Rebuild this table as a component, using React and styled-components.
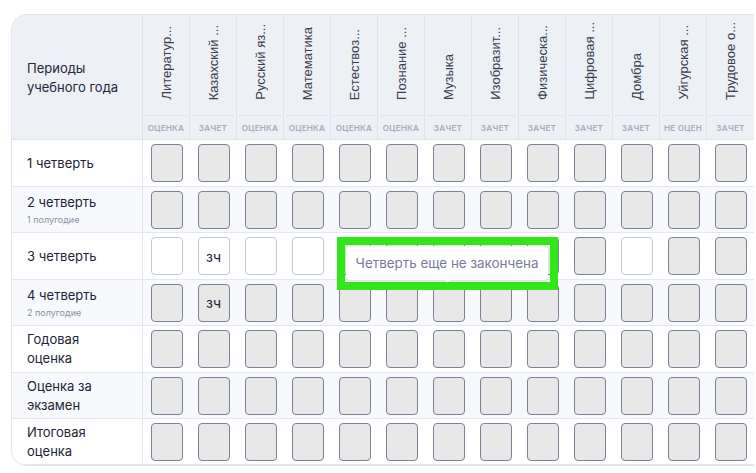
import React from "react";
import styled, { createGlobalStyle } from "styled-components";

const Global = createGlobalStyle`
  html, body { margin: 0; padding: 0; background: #ffffff; overflow: hidden; }
  * { box-sizing: border-box; }
`;

const COLS = "131px repeat(13, 47px)";

const Page = styled.div`
  padding: 14px 0 0 11px;
  width: 756px;
  height: 473px;
  overflow: hidden;
`;

const Card = styled.div`
  position: relative;
  width: max-content;
  border: 1px solid #e1e5ec;
  border-right: none;
  border-radius: 16px 0 0 16px;
  overflow: hidden;
  background: #ffffff;
  font-family: Inter, "Noto Sans", sans-serif;
`;

const HeaderRow = styled.div`
  display: grid;
  grid-template-columns: ${COLS};
  background: #edf0f5;
  border-bottom: 1px solid #dfe3ea;
`;

const CornerCell = styled.div`
  display: flex;
  align-items: center;
  padding: 2px 0 0 15px;
  border-right: 1px solid #dfe3ea;
  font-size: 13px;
  line-height: 19px;
  color: #23273a;
`;

const SubjectHead = styled.div`
  display: flex;
  flex-direction: column;
  border-right: 1px solid #dfe3ea;
  &:last-child { border-right: none; }
`;

const NameArea = styled.div`
  height: 100px;
  display: flex;
  align-items: flex-end;
  justify-content: center;
  padding-bottom: 15px;
`;

const NameText = styled.span`
  writing-mode: vertical-rl;
  transform: rotate(180deg);
  white-space: nowrap;
  font-family: "Liberation Sans", Arial, sans-serif;
  font-size: 13px;
  color: #3a3e50;
`;

const TypeLabel = styled.div`
  height: 24px;
  margin: 0 2px;
  border-top: 1px solid #dfe3ea;
  display: flex;
  align-items: center;
  justify-content: center;
  font-size: 8.2px;
  font-weight: 600;
  letter-spacing: 0.2px;
  color: #a8adb9;
  white-space: nowrap;
  overflow: hidden;
`;

const Row = styled.div`
  display: grid;
  grid-template-columns: ${COLS};
  height: ${(p) => (p.$short ? 46 : 47)}px;
  border-bottom: 1px solid #e3e7ee;
  background: ${(p) => (p.$alt ? "#f7f9fc" : "#ffffff")};
`;

const LabelCell = styled.div`
  display: flex;
  flex-direction: column;
  justify-content: center;
  padding-left: 15px;
  border-right: 1px solid #e1e5ec;
  font-size: 13px;
  line-height: 19px;
  color: #202436;
`;

const SubNote = styled.div`
  font-size: 9px;
  line-height: 12px;
  margin-top: 2px;
  color: #8b90a0;
`;

const Cell = styled.div`
  display: flex;
  align-items: center;
  justify-content: center;
`;

const Box = styled.div`
  width: 32px;
  height: 38px;
  border-radius: 4px;
  border: 1px solid ${(p) => (p.$empty ? "#c3c9d5" : "#7b8197")};
  background: ${(p) => (p.$empty ? "#ffffff" : "#e8e8e8")};
  display: flex;
  align-items: center;
  justify-content: center;
  font-size: 14px;
  font-weight: 400;
  color: #1f2230;
`;

const Highlight = styled.div`
  position: absolute;
  left: 325px;
  top: 222px;
  width: 221px;
  height: 53px;
  border: 8px solid #33e61a;
  padding: 1px 2px 2px 1px;
  display: flex;
`;

const Tooltip = styled.div`
  position: relative;
  flex: 1;
  background: #ffffff;
  border-radius: 4px;
  box-shadow: 0 1px 3px rgba(40, 45, 70, 0.16);
  display: flex;
  align-items: center;
  justify-content: center;
  font-size: 13.4px;
  color: #777b95;
  &::after {
    content: "";
    position: absolute;
    left: 50%;
    bottom: -2px;
    width: 4px;
    height: 4px;
    margin-left: -2px;
    background: #ffffff;
    transform: rotate(45deg);
  }
`;

const subjects = [
  ["Литератур...", "ОЦЕНКА"],
  ["Казахский ...", "ЗАЧЕТ"],
  ["Русский яз...", "ОЦЕНКА"],
  ["Математика", "ОЦЕНКА"],
  ["Естествоз...", "ОЦЕНКА"],
  ["Познание ...", "ОЦЕНКА"],
  ["Музыка", "ЗАЧЕТ"],
  ["Изобразит...", "ЗАЧЕТ"],
  ["Физическа...", "ЗАЧЕТ"],
  ["Цифровая ...", "ЗАЧЕТ"],
  ["Домбра", "ЗАЧЕТ"],
  ["Уйгурская ...", "НЕ ОЦЕН"],
  ["Трудовое о...", "ЗАЧЕТ"],
];

const G = { empty: false, text: "" };
const W = { empty: true, text: "" };
const allGray = Array(13).fill(G);

const rows = [
  { label: ["1 четверть"], cells: allGray },
  { label: ["2 четверть"], note: "1 полугодие", cells: allGray, short: true },
  {
    label: ["3 четверть"],
    cells: [W, { empty: true, text: "зч" }, W, W, G, G, G, G, G, G, W, G, G],
  },
  {
    label: ["4 четверть"],
    note: "2 полугодие",
    cells: allGray.map((c, i) => (i === 1 ? { empty: false, text: "зч" } : c)),
    short: true,
  },
  { label: ["Годовая", "оценка"], cells: allGray },
  { label: ["Оценка за", "экзамен"], cells: allGray, short: true },
  { label: ["Итоговая", "оценка"], cells: allGray, short: true },
];

export default function App() {
  return (
    <>
      <Global />
      <Page>
        <Card>
          <HeaderRow>
            <CornerCell>
              Периоды
              <br />
              учебного года
            </CornerCell>
            {subjects.map(([name, type]) => (
              <SubjectHead key={name}>
                <NameArea>
                  <NameText>{name}</NameText>
                </NameArea>
                <TypeLabel>{type}</TypeLabel>
              </SubjectHead>
            ))}
          </HeaderRow>
          {rows.map((r, ri) => (
            <Row key={ri} $alt={ri % 2 === 1} $short={r.short}>
              <LabelCell>
                {r.label.map((l) => (
                  <div key={l}>{l}</div>
                ))}
                {r.note && <SubNote>{r.note}</SubNote>}
              </LabelCell>
              {r.cells.map((c, ci) => (
                <Cell key={ci}>
                  <Box $empty={c.empty}>{c.text}</Box>
                </Cell>
              ))}
            </Row>
          ))}
          <Highlight>
            <Tooltip>Четверть еще не закончена</Tooltip>
          </Highlight>
        </Card>
      </Page>
    </>
  );
}
